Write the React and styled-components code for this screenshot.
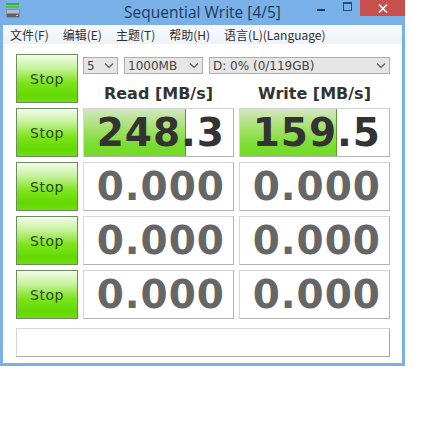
import React from 'react';
import styled, { createGlobalStyle } from 'styled-components';

const GlobalStyle = createGlobalStyle`
  html, body {
    margin: 0;
    padding: 0;
    background: #ffffff;
  }
  body {
    font-family: "DejaVu Sans", Verdana, sans-serif;
  }
`;

const Window = styled.div`
  width: 399px;
  border: 3px solid #79b0e8;
  border-top: none;
  background: #79b0e8;
`;

const TitleBar = styled.div`
  height: 25px;
  display: flex;
  align-items: flex-start;
  margin: 0 -3px;
`;

const AppIcon = styled.div`
  width: 16px;
  height: 16px;
  margin: 3px 0 0 5px;
`;

const Title = styled.div`
  flex: 1;
  min-width: 0;
  white-space: nowrap;
  text-align: center;
  font-family: "Open Sans", "Noto Sans", sans-serif;
  font-size: 15.5px;
  line-height: 24px;
  color: #1d3a5e;
  padding-left: 76px;
`;

const Controls = styled.div`
  display: flex;
  align-items: flex-start;
  height: 16px;
`;

const CtrlButton = styled.div`
  width: ${(p) => p.w}px;
  height: 16px;
  display: flex;
  align-items: center;
  justify-content: center;
  background: ${(p) => (p.close ? '#c74f4c' : 'transparent')};
`;

const MinGlyph = styled.div`
  width: 8px;
  height: 2px;
  background: #1d3a5e;
  margin-top: 4px;
`;

const MaxGlyph = styled.div`
  width: 7px;
  height: 6px;
  border: 1px solid #2a4d78;
  border-top-width: 2px;
  margin-top: -3px;
`;

const MenuBar = styled.div`
  height: 19px;
  background: linear-gradient(#f7f9fc, #eef3f9);
  display: flex;
  align-items: center;
  padding-left: 7px;
  gap: 14px;
  font-family: "Noto Sans CJK SC", "Noto Sans", sans-serif;
  font-size: 12px;
  color: #2f2f2f;
`;

const MenuItem = styled.span`
  line-height: 19px;
`;

const Client = styled.div`
  background: #ffffff;
  padding: 10px 13px 6px 13px;
`;

const Grid = styled.div`
  display: grid;
  grid-template-columns: 62px 151px 151px;
  grid-auto-rows: 49px;
  column-gap: 5px;
  row-gap: 5px;
`;

const StopButton = styled.div`
  box-sizing: border-box;
  border: 1px solid #6f8c60;
  background: linear-gradient(
    to bottom,
    #f3fbea 0%,
    #c6f29c 28%,
    #7fe41e 58%,
    #62d900 85%,
    #6fdc12 100%
  );
  display: flex;
  align-items: center;
  justify-content: center;
  font-family: "Comic Sans MS", "DejaVu Sans", sans-serif;
  font-size: 14px;
  letter-spacing: 0.5px;
  color: #2c4a1e;
`;

const HeaderSide = styled.div`
  grid-column: 2 / span 2;
  display: flex;
  flex-direction: column;
`;

const ComboRow = styled.div`
  display: flex;
  gap: 6px;
  margin-top: 3px;
  height: 17px;
`;

const Combo = styled.div`
  box-sizing: border-box;
  width: ${(p) => p.w}px;
  height: 17px;
  border: 1px solid #adadad;
  background: #e6e6e6;
  display: flex;
  align-items: center;
  justify-content: space-between;
  padding: 0 3px 0 3px;
  font-family: "DejaVu Sans", sans-serif;
  font-size: 12px;
  color: #444;
`;

const Chevron = () => (
  <svg width="10" height="7" viewBox="0 0 10 7">
    <path d="M1 1.5 L5 5.5 L9 1.5" fill="none" stroke="#555" strokeWidth="1.2" />
  </svg>
);

const Labels = styled.div`
  display: grid;
  grid-template-columns: 151px 151px;
  column-gap: 5px;
  margin-top: 10px;
`;

const Label = styled.div`
  text-align: center;
  font-family: "DejaVu Sans", Verdana, sans-serif;
  font-weight: bold;
  font-size: 16px;
  color: #333;
  line-height: 20px;
`;

const Cell = styled.div`
  position: relative;
  box-sizing: border-box;
  border: 1px solid #d6d6d6;
  border-right-color: #b2b2b2;
  border-bottom-color: #b2b2b2;
  background: #ffffff;
  overflow: hidden;
`;

const Bar = styled.div`
  position: absolute;
  left: 0;
  top: 0;
  bottom: 0;
  background: linear-gradient(to bottom, #d3e7c2 0%, #a6e16e 40%, #7cdc32 75%, #72da26 100%);
  border-right: 1px solid #5e9a3a;
`;

const Value = styled.div`
  position: relative;
  height: 100%;
  display: flex;
  align-items: center;
  justify-content: flex-end;
  padding-right: 8px;
  font-family: "DejaVu Sans", Verdana, sans-serif;
  font-weight: bold;
  font-size: 39px;
  letter-spacing: 1px;
  color: ${(p) => (p.dim ? '#666666' : '#333333')};
`;

const CommentBox = styled.div`
  margin-top: 9px;
  height: 29px;
  width: 374px;
  box-sizing: border-box;
  border: 1px solid #d6d6d6;
  border-right-color: #a8a8a8;
  border-bottom-color: #a8a8a8;
`;

const rows = [
  { read: '248.3', write: '159.5', readBar: 101, writeBar: 96, dim: false },
  { read: '0.000', write: '0.000', dim: true },
  { read: '0.000', write: '0.000', dim: true },
  { read: '0.000', write: '0.000', dim: true },
];

export default function App() {
  return (
    <>
      <GlobalStyle />
      <Window>
        <TitleBar>
          <AppIcon>
            <svg width="16" height="16" viewBox="0 0 16 16">
              <rect x="1" y="0" width="13" height="2" fill="#3fae3a" />
              <rect x="1" y="3" width="13" height="2" fill="#56c24c" />
              <rect x="1" y="6" width="14" height="9" rx="1" fill="#8a9096" />
              <rect x="2" y="7" width="12" height="3" fill="#b8bec4" />
              <rect x="2" y="11" width="12" height="3" fill="#5b6168" />
              <rect x="11" y="12" width="2" height="1" fill="#d0d4d8" />
            </svg>
          </AppIcon>
          <Title>Sequential Write [4/5]</Title>
          <Controls>
            <CtrlButton w={26}>
              <MinGlyph />
            </CtrlButton>
            <CtrlButton w={26}>
              <MaxGlyph />
            </CtrlButton>
            <CtrlButton w={45} close>
              <svg width="10" height="9" viewBox="0 0 10 9">
                <path d="M1 0.5 L9 8.5 M9 0.5 L1 8.5" stroke="#fff" strokeWidth="1.6" />
              </svg>
            </CtrlButton>
          </Controls>
        </TitleBar>
        <MenuBar>
          <MenuItem>文件(F)</MenuItem>
          <MenuItem>编辑(E)</MenuItem>
          <MenuItem>主题(T)</MenuItem>
          <MenuItem>帮助(H)</MenuItem>
          <MenuItem>语言(L)(Language)</MenuItem>
        </MenuBar>
        <Client>
          <Grid>
            <StopButton>Stop</StopButton>
            <HeaderSide>
              <ComboRow>
                <Combo w={35}>
                  5 <Chevron />
                </Combo>
                <Combo w={79}>
                  1000MB <Chevron />
                </Combo>
                <Combo w={181}>
                  D: 0% (0/119GB) <Chevron />
                </Combo>
              </ComboRow>
              <Labels>
                <Label>Read [MB/s]</Label>
                <Label>Write [MB/s]</Label>
              </Labels>
            </HeaderSide>
            {rows.map((r, i) => (
              <React.Fragment key={i}>
                <StopButton>Stop</StopButton>
                <Cell>
                  {r.readBar && <Bar style={{ width: r.readBar }} />}
                  <Value dim={r.dim}>{r.read}</Value>
                </Cell>
                <Cell>
                  {r.writeBar && <Bar style={{ width: r.writeBar }} />}
                  <Value dim={r.dim}>{r.write}</Value>
                </Cell>
              </React.Fragment>
            ))}
          </Grid>
          <CommentBox />
        </Client>
      </Window>
    </>
  );
}
